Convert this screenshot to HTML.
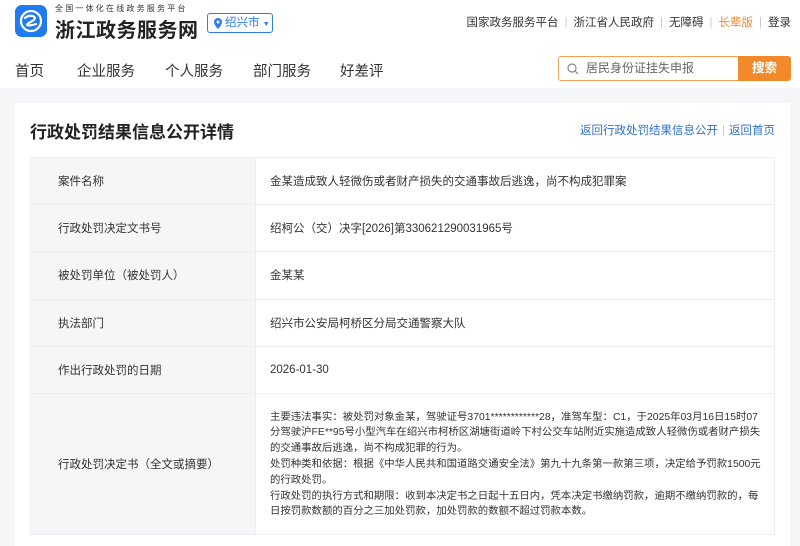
<!DOCTYPE html>
<html><head><meta charset="utf-8"><style>
*{margin:0;padding:0;box-sizing:border-box}
html,body{width:800px;height:546px;overflow:hidden}
body{background:#f5f6f8;font-family:"Liberation Sans","Noto Sans CJK SC",sans-serif;color:#333;position:relative}
.hdr{position:absolute;left:0;top:0;width:800px;height:88px;background:#fff}
.abs{position:absolute;white-space:nowrap}
.logo{left:15px;top:5px;width:32px;height:32px;border-radius:7px;background:#1e7cf0}
.sub{left:55px;top:3px;font-size:8px;letter-spacing:2.2px;color:#333}
.title{left:55px;top:14px;font-size:20px;font-weight:bold;color:#222;letter-spacing:0.5px}
.city{left:207px;top:13px;width:66px;height:20px;border:1px solid #2f7cf0;border-radius:3px;color:#2f7cf0;font-size:11.5px;line-height:18px;padding-left:17px}
.top{top:14px;font-size:11.5px;color:#333;right:9px}
.top span.s{color:#ccc;margin:0 6px}
.nav{top:60px;font-size:14.5px;color:#333}
.search{left:558px;top:56px;width:181px;height:25px;border:1px solid #f5a35a;border-right:none;border-radius:3px 0 0 3px;background:#fff;font-size:12px;color:#666;line-height:23px;padding-left:27px}
.btn{left:738px;top:56px;width:53px;height:25px;background:#f28a2c;border-radius:0 3px 3px 0;color:#fff;font-size:12.5px;font-weight:bold;text-align:center;line-height:25px}
.card{position:absolute;left:15px;top:103px;width:775px;height:460px;background:#fff}
.h1{left:30px;top:118px;font-size:17px;font-weight:bold;color:#222}
.links{right:25px;top:122px;font-size:11.5px;color:#2f6fd0}
table{position:absolute;left:30px;top:157px;width:745px;border-collapse:collapse;font-size:11.5px;table-layout:fixed}
td{border:1px solid #eceef2;height:47.2px;vertical-align:middle}
td.l{width:225px;background:#f5f6f8;padding-left:27px;color:#333}
td.r{padding-left:14px;color:#333}
td.big{height:141px;font-size:10.4px;line-height:15.8px;padding-left:14px;padding-top:2px;white-space:nowrap;overflow:hidden}
</style></head><body>
<div class="hdr"></div>
<div class="abs logo"><svg width="32" height="32" viewBox="0 0 32 32"><circle cx="16" cy="16" r="10" fill="none" stroke="#fff" stroke-width="2.2"/><path d="M10 13c3-3 9-3 10 0c0 3-7 4-8 7c2 1 6 0 9-1" fill="none" stroke="#fff" stroke-width="2.2" stroke-linecap="round"/></svg></div>
<div class="abs sub">全国一体化在线政务服务平台</div>
<div class="abs title">浙江政务服务网</div>
<div class="abs city"><svg style="position:absolute;left:6px;top:4px" width="8" height="11" viewBox="0 0 8 11"><path d="M4 0a4 4 0 0 1 4 4c0 3-4 7-4 7S0 7 0 4a4 4 0 0 1 4-4z" fill="#2f7cf0"/><circle cx="4" cy="4" r="1.5" fill="#fff"/></svg>绍兴市 <span style="font-size:7px">▼</span></div>
<div class="abs top">国家政务服务平台<span class="s">|</span>浙江省人民政府<span class="s">|</span>无障碍<span class="s">|</span><span style="color:#f28a2c">长辈版</span><span class="s">|</span>登录</div>
<div class="abs nav" style="left:15px">首页</div>
<div class="abs nav" style="left:77px">企业服务</div>
<div class="abs nav" style="left:165px">个人服务</div>
<div class="abs nav" style="left:253px">部门服务</div>
<div class="abs nav" style="left:340px">好差评</div>
<div class="abs search"><svg style="position:absolute;left:8px;top:6px" width="12" height="12" viewBox="0 0 12 12"><circle cx="5" cy="5" r="4" fill="none" stroke="#888" stroke-width="1.2"/><path d="M8 8l3 3" stroke="#888" stroke-width="1.2"/></svg>居民身份证挂失申报</div>
<div class="abs btn">搜索</div>
<div class="card"></div>
<div class="abs h1">行政处罚结果信息公开详情</div>
<div class="abs links">返回行政处罚结果信息公开<span style="color:#ccc;margin:0 4px">|</span>返回首页</div>
<table>
<col style="width:225px"><col>
<tr><td class="l">案件名称</td><td class="r">金某造成致人轻微伤或者财产损失的交通事故后逃逸，尚不构成犯罪案</td></tr>
<tr><td class="l">行政处罚决定文书号</td><td class="r">绍柯公（交）决字[2026]第330621290031965号</td></tr>
<tr><td class="l">被处罚单位（被处罚人）</td><td class="r">金某某</td></tr>
<tr><td class="l">执法部门</td><td class="r">绍兴市公安局柯桥区分局交通警察大队</td></tr>
<tr><td class="l">作出行政处罚的日期</td><td class="r">2026-01-30</td></tr>
<tr><td class="l">行政处罚决定书（全文或摘要）</td><td class="r big">主要违法事实：被处罚对象金某，驾驶证号3701************28，准驾车型：C1，于2025年03月16日15时07<br>分驾驶沪FE**95号小型汽车在绍兴市柯桥区湖塘街道岭下村公交车站附近实施造成致人轻微伤或者财产损失<br>的交通事故后逃逸，尚不构成犯罪的行为。<br>处罚种类和依据：根据《中华人民共和国道路交通安全法》第九十九条第一款第三项，决定给予罚款1500元<br>的行政处罚。<br>行政处罚的执行方式和期限：收到本决定书之日起十五日内，凭本决定书缴纳罚款，逾期不缴纳罚款的，每<br>日按罚款数额的百分之三加处罚款，加处罚款的数额不超过罚款本数。</td></tr>
</table>
</body></html>
